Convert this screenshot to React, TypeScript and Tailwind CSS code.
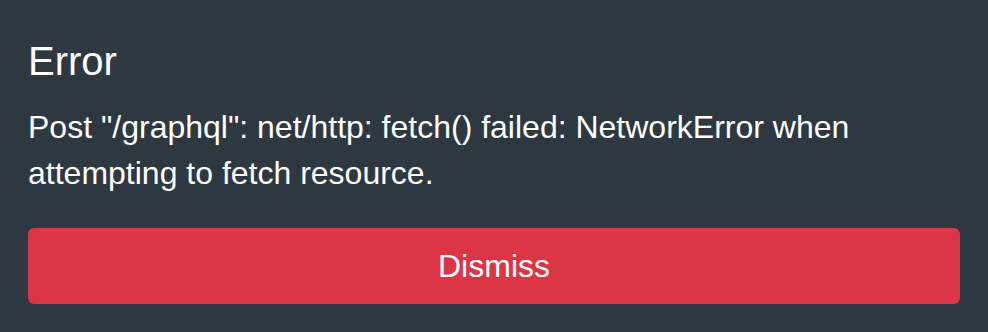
const ErrorPanel = () => {
  return (
    <div className="min-h-[332px] w-full bg-[#2e3841] px-[28px] pt-[37px] font-['Liberation_Sans',Arial,sans-serif] text-white">
      <h5 className="text-[40px] leading-[48px] font-normal">Error</h5>
      <p className="mt-[19px] text-[32px] leading-[46px]">
        Post "/graphql": net/http: fetch() failed: NetworkError when attempting to fetch resource.
      </p>
      <button
        type="button"
        className="mt-[32px] block w-full rounded-[6px] bg-[#dc3545] py-[14px] text-[32px] leading-[48px] text-white"
      >
        Dismiss
      </button>
    </div>
  );
};

export default function App() {
  return <ErrorPanel />;
}
